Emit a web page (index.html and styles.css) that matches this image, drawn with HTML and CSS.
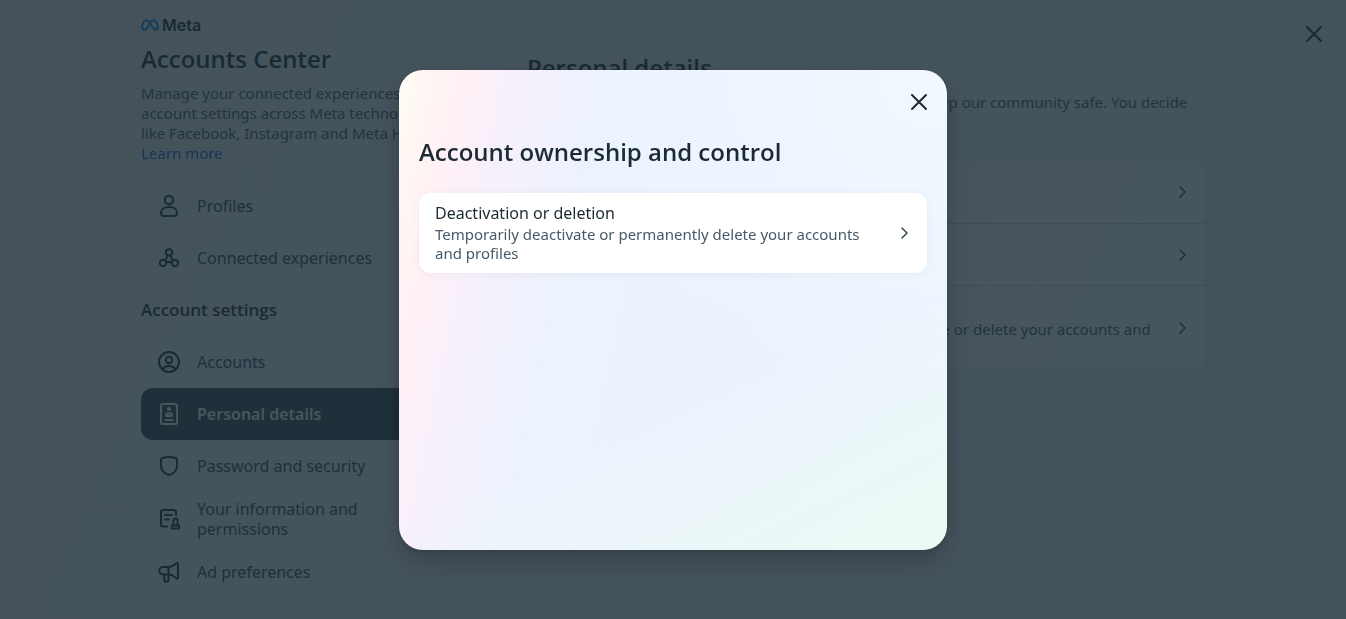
FILE: index.html
```html
<!DOCTYPE html>
<html lang="en">

<head>
    <meta charset="UTF-8" />
    <meta name="viewport" content="width=device-width, initial-scale=1" />
    <title>Accounts Center</title>
    <link rel="stylesheet" href="styles.css">
</head>

<body>
    <div class="page">
        <aside class="sidebar">
            <div class="brand">
                <svg class="brand-mark" viewBox="0 0 36 24" aria-hidden="true">
                    <path d="M18 8C15.500 4 13.500 2.500 11 2.500C6 2.500 2.500 10 2.500 15.500C2.500 19 4.500 21.500 7.500 21.500C11 21.500 13 17 18 8C20 4.500 22 2.500 25 2.500C30 2.500 33.500 10 33.500 15.500C33.500 19 31.500 21.500 28.500 21.500C25 21.500 23 17 18 8Z" />
                </svg>
                <span>Meta</span>
            </div>
            <h1>Accounts Center</h1>
            <p class="intro">Manage your connected experiences and account settings across Meta technologies like Facebook, Instagram and Meta Horizon. <a href="#">Learn more</a></p>

            <nav>
                <a class="nav-item" href="#">
                    <svg class="icon" viewBox="0 0 24 24"><circle cx="12" cy="6" r="4.200" /><path d="M4 19c0-3.600 3-6 8-6s8 2.400 8 6c0 2-1 3-3 3H7c-2 0-3-1-3-3Z" /></svg>
                    <span>Profiles</span>
                </a>
                <a class="nav-item" href="#">
                    <svg class="icon" viewBox="0 0 24 24"><circle cx="12" cy="6.500" r="3.200" /><circle cx="6" cy="17" r="3.200" /><circle cx="18" cy="17" r="3.200" /><path d="M10.300 9.500c0 2-.6 3.300-2.300 4.500M13.700 9.500c0 2 .6 3.300 2.300 4.500M9.200 16.500c1.800-.8 3.800-.8 5.600 0" /></svg>
                    <span>Connected experiences</span>
                </a>

                <h2 class="nav-title">Account settings</h2>

                <a class="nav-item" href="#">
                    <svg class="icon" viewBox="0 0 24 24"><circle cx="12" cy="12" r="10" /><circle cx="12" cy="10" r="3.200" /><path d="M5.500 19.200c1.500-2.200 3.800-3.200 6.500-3.200s5 1 6.500 3.200" /></svg>
                    <span>Accounts</span>
                </a>
                <a class="nav-item active" href="#">
                    <svg class="icon" viewBox="0 0 24 24"><rect x="4" y="2" width="16" height="20" rx="1.500" /><circle class="solid" cx="12" cy="7" r="2" /><path d="M9 13.500c0-1.500 1-2.300 3-2.300s3 .8 3 2.300c0 .4-.2.500-.5.500h-5c-.3 0-.5-.1-.5-.5ZM8.500 18h7" /></svg>
                    <span>Personal details</span>
                </a>
                <a class="nav-item" href="#">
                    <svg class="icon" viewBox="0 0 24 24"><path d="M4 5.500C4 4 8 3 12 3s8 1 8 2.500V12c0 4-3.500 7.500-8 9-4.500-1.500-8-5-8-9Z" /></svg>
                    <span>Password and security</span>
                </a>
                <a class="nav-item" href="#">
                    <svg class="icon" viewBox="0 0 24 24"><path d="M10 19.500H6a2 2 0 0 1-2-2V5a2 2 0 0 1 2-2h11a2 2 0 0 1 2 2v3M8 8h7M8 12.500h4" /><path d="M16.500 18v-4.500a2 2 0 0 1 4 0V18M15 18.500h7v3h-7z" /></svg>
                    <span>Your information and permissions</span>
                </a>
                <a class="nav-item" href="#">
                    <svg class="icon" viewBox="0 0 24 24"><path d="M11.500 7H6a3.500 3.500 0 0 0 0 7.500h5.500c3 0 5.500 1.500 8 4 .8.600 1.500.2 1.500-.5V4c0-1-.8-1.300-1.500-.7C17 5.500 14.500 7 11.500 7v7.500M7 14.500l.4 5.500c.1 2.200 4.100 2.200 4.100 0v-5.500" /></svg>
                    <span>Ad preferences</span>
                </a>
            </nav>
        </aside>

        <main class="content">
            <h2>Personal details</h2>
            <p class="lead">Meta uses this information to verify your identity and to keep our community safe. You decide what personal details you make visible to others.</p>
            <div class="details">
                <a class="detail-row" href="#">
                    <span class="row-text"><span class="row-title">Contact info</span></span>
                    <svg class="chevron" viewBox="0 0 16 16"><path d="m5 3 5 5-5 5" /></svg>
                </a>
                <a class="detail-row" href="#">
                    <span class="row-text"><span class="row-title">Birthday</span></span>
                    <svg class="chevron" viewBox="0 0 16 16"><path d="m5 3 5 5-5 5" /></svg>
                </a>
                <a class="detail-row tall" href="#">
                    <span class="row-text">
                        <span class="row-title">Account ownership and control</span>
                        <span class="row-note">Manage your data, modify your legacy contact, deactivate or delete your accounts and profiles.</span>
                    </span>
                    <svg class="chevron" viewBox="0 0 16 16"><path d="m5 3 5 5-5 5" /></svg>
                </a>
            </div>
        </main>
    </div>

    <button class="close page-close" aria-label="Close Accounts Center">
        <svg viewBox="0 0 24 24"><path d="m5 5 14 14M19 5 5 19" /></svg>
    </button>

    <div class="overlay">
        <div class="modal" role="dialog" aria-modal="true" aria-labelledby="modal-title">
            <div class="modal-bar">
                <button class="close" aria-label="Close">
                    <svg viewBox="0 0 24 24"><path d="m5 5 14 14M19 5 5 19" /></svg>
                </button>
            </div>
            <h2 id="modal-title">Account ownership and control</h2>
            <a class="option" href="#">
                <span class="row-text">
                    <span class="row-title">Deactivation or deletion</span>
                    <span class="row-note">Temporarily deactivate or permanently delete your accounts and profiles</span>
                </span>
                <svg class="chevron" viewBox="0 0 16 16"><path d="m5 3 5 5-5 5" /></svg>
            </a>
        </div>
    </div>
</body>

</html>
```
FILE: styles.css
```css
* {
    box-sizing: border-box;
}

body {
    margin: 0;
    font-family: 'Noto Sans', 'Open Sans', sans-serif;
    font-size: 16px;
    line-height: 20px;
    color: #1c2b33;
    background: linear-gradient(115deg, #f3f1f4 0%, #eef2f7 25%, #ecf2f8 65%, #ecf5f3 100%);
    min-height: 100vh;
    overflow: hidden;
}

h1,
h2,
p {
    margin: 0;
}

h1,
h2 {
    font-family: 'Open Sans', 'Noto Sans', sans-serif;
    font-size: 24px;
    line-height: 28px;
    font-weight: 600;
}

a {
    color: inherit;
    text-decoration: none;
}

svg {
    fill: none;
    stroke: currentColor;
    stroke-linecap: round;
    stroke-linejoin: round;
    flex-shrink: 0;
}

.page {
    display: flex;
    max-width: 1064px;
    min-height: 100vh;
    margin: 0 auto;
}

/* Sidebar */
.sidebar {
    width: 353px;
    flex-shrink: 0;
    padding: 15px 20px 0 0;
    border-right: 1px solid #dee5ea;
}

.brand {
    display: flex;
    align-items: center;
    gap: 3px;
    margin-bottom: 10px;
    font-family: Inter, sans-serif;
    font-size: 16px;
    font-weight: 600;
}

.brand-mark {
    width: 18px;
    height: 12px;
    color: #0082fb;
    stroke-width: 4;
}

.intro {
    margin-top: 10px;
    margin-bottom: 17px;
    padding-right: 20px;
    font-size: 15px;
    color: #465a69;
}

.intro a {
    color: #0064e0;
}

.nav-item {
    display: flex;
    align-items: center;
    gap: 16px;
    min-height: 52px;
    padding: 7px 80px 7px 16px;
    border-radius: 12px;
    color: #344854;
}

.icon {
    width: 24px;
    height: 24px;
    color: #1c2b33;
    stroke-width: 2;
}

.icon .solid {
    fill: currentColor;
    stroke: none;
}

.nav-item.active {
    background-color: #344854;
    color: #fff;
    font-weight: 600;
}

.active .icon {
    color: #fff;
}

.nav-title {
    margin: 16px 0;
    font-size: 17px;
    line-height: 20px;
}

/* Main column */
.content {
    flex: 1;
    padding: 54px 0 0 33px;
}

.lead {
    margin-top: 10px;
    margin-bottom: 29px;
    font-size: 15px;
    color: #465a69;
}

.details {
    background-color: rgba(255, 255, 255, 0.7);
    border-radius: 12px;
}

.detail-row {
    display: flex;
    align-items: center;
    gap: 16px;
    min-height: 62px;
    padding: 8px 14px 8px 16px;
}

.detail-row + .detail-row {
    border-top: 1px solid #cbd2d9;
}

.detail-row.tall {
    min-height: 84px;
}

.row-text {
    display: flex;
    flex: 1;
    flex-direction: column;
    gap: 2px;
}

.row-note {
    font-size: 15px;
    line-height: 19px;
    color: #465a69;
}

.chevron {
    width: 16px;
    height: 16px;
    color: #344854;
    stroke-width: 1.5;
}

.close {
    display: flex;
    padding: 0;
    border: none;
    background: none;
    color: #1c2b33;
    cursor: pointer;
}

.close svg {
    width: 24px;
    height: 24px;
    stroke-width: 2;
}

.page-close {
    position: absolute;
    top: 22px;
    right: 20px;
}

/* Dialog */
.overlay {
    position: fixed;
    inset: 0;
    display: flex;
    align-items: center;
    justify-content: center;
    background-color: rgba(26, 42, 52, 0.8);
}

.modal {
    width: 100%;
    max-width: 548px;
    min-height: 480px;
    padding: 20px;
    border-radius: 24px;
    background:
        radial-gradient(ellipse at 100% 0, #f1f8ff 0%, rgba(241, 248, 255, 0) 50%),
        linear-gradient(155deg, rgba(236, 250, 244, 0) 62%, #ecfaf4 100%),
        linear-gradient(102deg, #fffaf3 2%, #fff0f5 10%, #f6f0fc 18%, #ebf3fd 33%, #ebf2fe 60%, #ebf4fe 100%);
    box-shadow: 0 12px 28px rgba(0, 0, 0, 0.2), 0 2px 4px rgba(0, 0, 0, 0.1);
}

.modal-bar {
    display: flex;
    justify-content: flex-end;
    margin-right: -4px;
    margin-bottom: 24px;
}

.option {
    display: flex;
    align-items: center;
    gap: 16px;
    margin-top: 27px;
    padding: 10px 14px 10px 16px;
    border-radius: 12px;
    background-color: #fff;
    box-shadow: 0 1px 8px rgba(28, 43, 51, 0.05);
}
```
